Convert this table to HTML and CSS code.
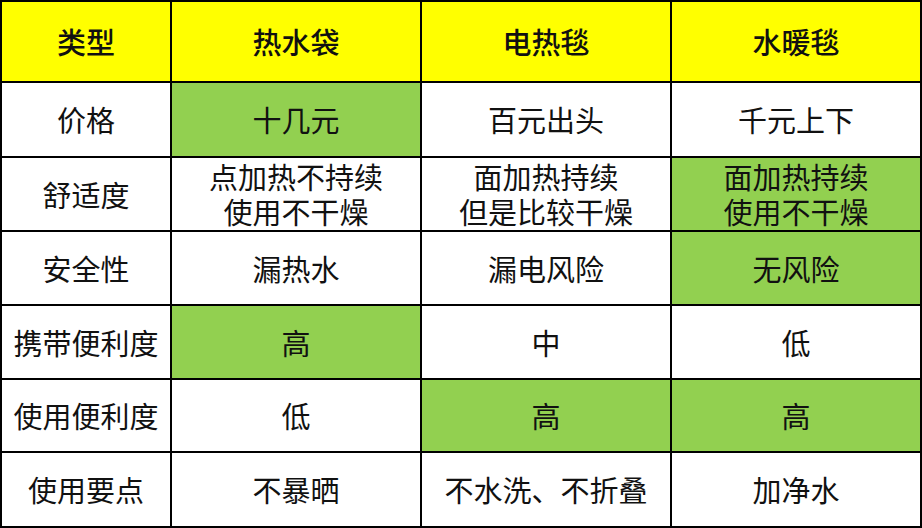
FILE: index.html
```html
<!DOCTYPE html>
<html lang="zh">
<head>
<meta charset="utf-8">
<link rel="stylesheet" href="styles.css">
</head>
<body>
<div class="table">
  <div class="cell head">类型</div>
  <div class="cell head">热水袋</div>
  <div class="cell head">电热毯</div>
  <div class="cell head">水暖毯</div>

  <div class="cell">价格</div>
  <div class="cell good">十几元</div>
  <div class="cell">百元出头</div>
  <div class="cell">千元上下</div>

  <div class="cell">舒适度</div>
  <div class="cell">点加热不持续<br>使用不干燥</div>
  <div class="cell">面加热持续<br>但是比较干燥</div>
  <div class="cell good">面加热持续<br>使用不干燥</div>

  <div class="cell">安全性</div>
  <div class="cell">漏热水</div>
  <div class="cell">漏电风险</div>
  <div class="cell good">无风险</div>

  <div class="cell">携带便利度</div>
  <div class="cell good">高</div>
  <div class="cell">中</div>
  <div class="cell">低</div>

  <div class="cell">使用便利度</div>
  <div class="cell">低</div>
  <div class="cell good">高</div>
  <div class="cell good">高</div>

  <div class="cell">使用要点</div>
  <div class="cell">不暴晒</div>
  <div class="cell">不水洗、不折叠</div>
  <div class="cell">加净水</div>
</div>
</body>
</html>
```

FILE: styles.css
```css
html, body {
  margin: 0;
  padding: 0;
  background: #ffffff;
}

.table {
  width: 922px;
  height: 528px;
  box-sizing: border-box;
  padding: 2px;
  background: #000000;
  display: grid;
  grid-template-columns: 168px 248px 248px 248px;
  grid-template-rows: 79px 73px 72px 72px 72px 71px 73px;
  gap: 2px;
  font-family: "Noto Sans CJK SC", "Noto Sans", sans-serif;
  font-size: 29px;
  line-height: 35px;
  color: #111111;
}

.cell {
  background: #ffffff;
  display: flex;
  align-items: center;
  justify-content: center;
  text-align: center;
  font-weight: 400;
}

.head {
  background: #ffff00;
  font-weight: 500;
}

.good {
  background: #92d050;
}
```
